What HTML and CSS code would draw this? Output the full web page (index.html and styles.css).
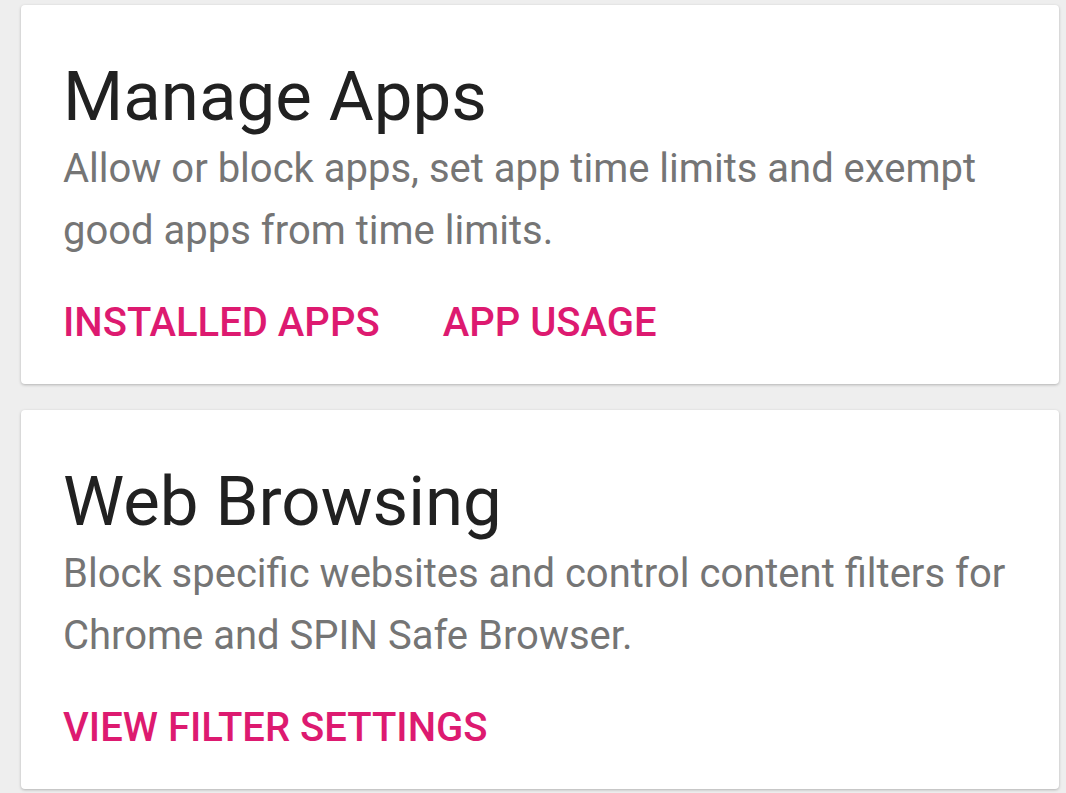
FILE: index.html
```html
<!DOCTYPE html>
<html lang="en">

<head>
    <meta charset="UTF-8" />
    <title>Manage</title>
    <link rel="stylesheet" href="styles.css">
</head>

<body>
    <div class="card">
        <h2 class="card-title">Manage Apps</h2>
        <p class="card-text">Allow or block apps, set app time limits and exempt good apps from time limits.</p>
        <div class="card-actions">
            <button class="action">INSTALLED APPS</button>
            <button class="action">APP USAGE</button>
        </div>
    </div>

    <div class="card">
        <h2 class="card-title">Web Browsing</h2>
        <p class="card-text">Block specific websites and control content filters for Chrome and SPIN Safe Browser.</p>
        <div class="card-actions">
            <button class="action">VIEW FILTER SETTINGS</button>
        </div>
    </div>
</body>

</html>
```

FILE: styles.css
```css
body {
    margin: 0;
    padding: 5px 7px 0 21px;
    background-color: #eeeeee;
    font-family: Roboto, "Liberation Sans", sans-serif;
}

.card {
    background-color: #fff;
    border-radius: 4px;
    box-shadow: 0 1px 3px rgba(0, 0, 0, 0.25);
    padding: 51px 42px 39px 42px;
    margin-bottom: 26px;
}

.card-title {
    margin: 0;
    font-size: 69px;
    font-weight: 400;
    line-height: 82px;
    color: #212121;
}

.card-text {
    margin: 0;
    font-size: 40px;
    line-height: 62px;
    color: #757575;
}

.card-actions {
    display: flex;
    gap: 63px;
    margin-top: 39px;
}

.action {
    border: none;
    background: none;
    padding: 0;
    font-family: inherit;
    font-size: 40px;
    font-weight: 500;
    line-height: 44px;
    color: #dd1a70;
    cursor: pointer;
}
```
